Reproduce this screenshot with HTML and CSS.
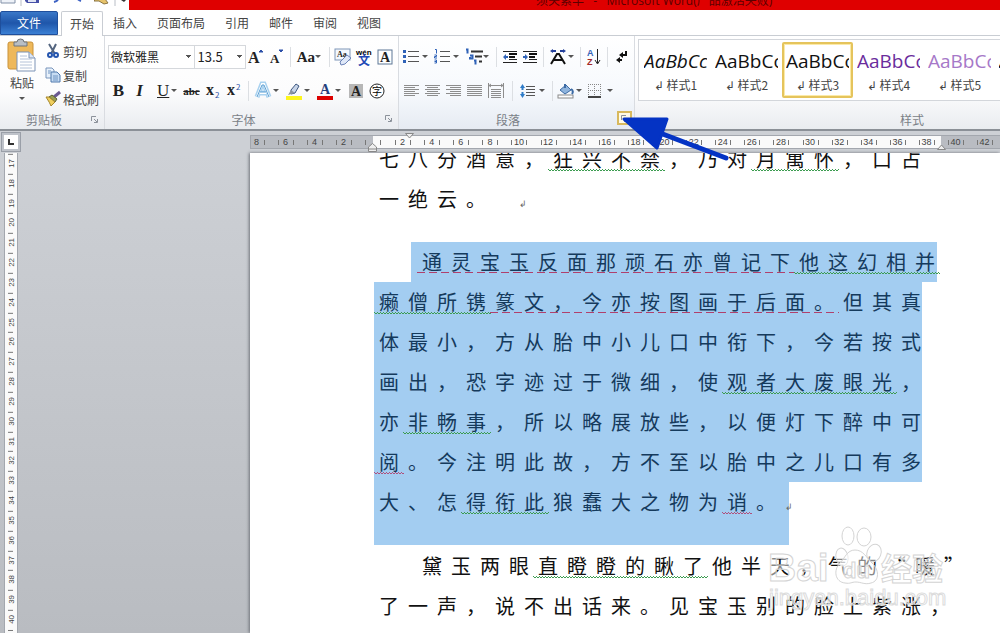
FILE: index.html
```
<!DOCTYPE html>
<html lang="zh-CN">
<head>
    <meta charset="UTF-8">
    <meta name="viewport" content="width=device-width, initial-scale=1.0">
    <title>Microsoft Word</title>
    <link rel="stylesheet" href="styles.css">
</head>
<body>
    <header class="titlebar">
        <div class="quick-access">
            <svg width="129" height="10" viewBox="0 0 129 10">
                <path d="M1 0v3h14V0" fill="#eef2f8" stroke="#8291a8"/>
                <path d="M21 0v6M115 0v6" stroke="#b9bec6"/>
                <path d="M25 0h14v3H27l-2-2z" fill="#4650a8"/>
                <path d="M28 0h8v2h-8z" fill="#dfe4f4"/>
                <path d="M54 2q4-1 4-3M81 1q-3-1-4-3" fill="none" stroke="#3d62c4" stroke-width="2"/>
                <path d="M94 1l5 0 5 3 4-1-3-4h-9z" fill="#e7c36a" stroke="#8a7443"/>
                <path d="M121 0h5l-2 2z" fill="#333"/>
            </svg>
        </div>
        <div class="title">须关索羊&nbsp;&nbsp; -&nbsp;&nbsp; Microsoft Word(产品激活失败)</div>
    </header>

    <nav class="tabs">
        <button class="tab file">文件</button>
        <button class="tab active">开始</button>
        <button class="tab">插入</button>
        <button class="tab">页面布局</button>
        <button class="tab">引用</button>
        <button class="tab">邮件</button>
        <button class="tab">审阅</button>
        <button class="tab">视图</button>
    </nav>

    <div class="ribbon">
        <section class="group clipboard">
            <div class="clip-tools">
                <button class="paste">
                    <svg width="30" height="34" viewBox="0 0 30 34">
                        <rect x="1" y="3" width="25" height="27" rx="2" fill="#eeb85a" stroke="#c9923a"/>
                        <path d="M7 3h3q0-3 3.500-3T17 3h3v4H7z" fill="#b9bec4" stroke="#6e747c"/>
                        <path d="M10 13h12l6 6v13H10z" fill="#fff" stroke="#7d93b5"/>
                        <path d="M22 13v6h6" fill="#dce6f4" stroke="#7d93b5"/>
                        <path d="M13 17h7M13 20h12M13 23h12M13 26h12M13 29h12" stroke="#b4c2d8"/>
                    </svg>
                    <span>粘贴</span>
                    <i class="caret"></i>
                </button>
                <div class="clip-list">
                    <button class="small">
                        <svg width="16" height="16" viewBox="0 0 16 16"><path d="M4 1l6 10M11 1L6 11" stroke="#54657f" stroke-width="2" fill="none"/><circle cx="5" cy="12" r="2" fill="none" stroke="#2555ae" stroke-width="2"/><circle cx="11" cy="12" r="2" fill="none" stroke="#2555ae" stroke-width="2"/></svg>
                        剪切
                    </button>
                    <button class="small">
                        <svg width="16" height="16" viewBox="0 0 16 16"><path d="M1 1h6l2 2v8H1z" fill="#e8f1fb" stroke="#7895bc"/><path d="M6 5h6l3 3v7H6z" fill="#c7dcf3" stroke="#4f78ac"/><path d="M3 4h3M3 6h2M8 9h5M8 11h5M8 13h5" stroke="#6f94c2"/></svg>
                        复制
                    </button>
                    <button class="small">
                        <svg width="16" height="16" viewBox="0 0 16 16"><path d="M15 1l-6 5" stroke="#6b5a92" stroke-width="3"/><path d="M7 4l5 4-2 3-6-5z" fill="#9a9f52" stroke="#5d6136"/><path d="M1 6l3 0 6 5-4 4q-1-3-5-9z" fill="#efcf5e" stroke="#a4852c"/></svg>
                        格式刷
                    </button>
                </div>
            </div>
            <footer class="group-label">剪贴板
                <button class="launcher" aria-label="剪贴板"><svg width="7" height="7" viewBox="0 0 7 7"><path d="M.5 5V.5H5M3 3l3 3M6.500 3v3.500H3" fill="none" stroke="#8c929b"/></svg></button>
            </footer>
        </section>

        <section class="group font">
            <div class="row">
                <select class="font-name" aria-label="字体"><option>微软雅黑</option></select>
                <select class="font-size" aria-label="字号"><option>13.5</option></select>
                <button class="btn"><svg width="16" height="18" viewBox="0 0 16 18"><text x="0" y="15" class="serif" font-size="16">A</text><path d="M11 4l2-2 2 2z" fill="#2d50a8" stroke="#2d50a8"/></svg></button>
                <button class="btn"><svg width="16" height="18" viewBox="0 0 16 18"><text x="1" y="15" class="serif" font-size="13">A</text><path d="M10 2h4l-2 2z" fill="#2d50a8" stroke="#2d50a8"/></svg></button>
                <i class="sep"></i>
                <button class="drop"><b class="serif-text">Aa</b><i class="caret"></i></button>
                <i class="sep"></i>
                <button class="btn"><svg width="18" height="18" viewBox="0 0 18 18"><rect x="1" y="1" width="15" height="11" fill="#f4f8fd" stroke="#7e96b8"/><text x="3" y="9" class="serif" font-size="8">Aa</text><path d="M6 14l7-7 4 3-6 6-4 1z" fill="#dfe8f8" stroke="#6c83b8"/></svg></button>
                <button class="btn"><svg width="18" height="18" viewBox="0 0 18 18"><text x="1" y="7" font-size="8" font-weight="bold" font-family="Liberation Sans">wén</text><text x="3" y="17" font-size="12" font-weight="bold" fill="#2349b5">文</text></svg></button>
                <button class="btn"><svg width="16" height="16" viewBox="0 0 16 16"><rect x="1" y="1" width="14" height="14" fill="#fff" stroke="#5c7796"/><text x="3" y="13" class="serif" font-size="14">A</text></svg></button>
            </div>
            <div class="row">
                <button class="btn"><b class="serif-text big">B</b></button>
                <button class="btn"><em class="serif-text big">I</em></button>
                <button class="drop"><u class="serif-text">U</u><i class="caret"></i></button>
                <button class="btn"><s class="serif-text tiny">abc</s></button>
                <button class="btn"><svg width="16" height="16" viewBox="0 0 16 16"><text x="1" y="12" class="serif" font-size="16">x</text><text x="10" y="15" font-size="8" fill="#2d50a8">2</text></svg></button>
                <button class="btn"><svg width="16" height="16" viewBox="0 0 16 16"><text x="1" y="12" class="serif" font-size="16">x</text><text x="10" y="7" font-size="8" fill="#2d50a8">2</text></svg></button>
                <i class="sep"></i>
                <button class="drop"><svg width="18" height="18" viewBox="0 0 18 18"><path d="M3 15L8 2h2l5 13M6 11h6" fill="none" stroke="#a9d2f0" stroke-width="5"/><path d="M3 15L8 2h2l5 13M6 11h6" fill="none" stroke="#fff" stroke-width="2"/><path d="M3 15L8 3h2l5 12M6 10h6" fill="none" stroke="#5b9ed2"/></svg><i class="caret"></i></button>
                <button class="drop"><svg width="18" height="18" viewBox="0 0 18 18"><path d="M1 14h16v4H1z" fill="#fdf51e"/><path d="M6 8l5-6 3 2-4 7-4 1z" fill="#c7d4e8" stroke="#3f5880"/><path d="M6 8l-3 5 7-2z" fill="#8b93a0"/></svg><i class="caret"></i></button>
                <button class="drop"><svg width="18" height="18" viewBox="0 0 18 18"><path d="M1 14h16v4H1z" fill="#dc0000"/><text x="4" y="12" font-size="14" font-family="Liberation Serif" font-weight="bold" fill="#26407c">A</text></svg><i class="caret"></i></button>
                <button class="btn"><svg width="16" height="16" viewBox="0 0 16 16"><path d="M1 1h14v14H1z" fill="#b7b7b7"/><text x="3" y="13" class="serif" font-size="14">A</text></svg></button>
                <button class="btn"><svg width="16" height="16" viewBox="0 0 16 16"><circle cx="8" cy="8" r="7" fill="#fff" stroke="#222"/><text x="3" y="12" font-size="10">字</text></svg></button>
            </div>
            <footer class="group-label">字体
                <button class="launcher" aria-label="字体"><svg width="7" height="7" viewBox="0 0 7 7"><path d="M.5 5V.5H5M3 3l3 3M6.500 3v3.500H3" fill="none" stroke="#8c929b"/></svg></button>
            </footer>
        </section>

        <section class="group paragraph">
            <div class="row">
                <button class="drop"><svg width="16" height="16" viewBox="0 0 16 16"><path d="M5 2.500h11M5 7.500h11M5 12.500h11" stroke="#555"/><path d="M0 1h3v3H0zM0 6h3v3H0zM0 11h3v3H0z" fill="#2f62b8"/></svg><i class="caret"></i></button>
                <button class="drop"><svg width="16" height="16" viewBox="0 0 16 16"><path d="M6 2.500h10M6 7.500h10M6 12.500h10" stroke="#555"/><path d="M1 .5h1.500v4M.5 6h2v1.500h-2V9H3M.5 11h2v3h-2M.5 12.500h2" fill="none" stroke="#2f62b8"/></svg><i class="caret"></i></button>
                <button class="drop"><svg width="18" height="16" viewBox="0 0 18 16"><path d="M6 2.500h12M10 7.500h7M14 12.500h3" stroke="#333" stroke-width="2"/><path d="M1 .5h1.500v4M5 6.500h2.500v3H5V8M9 11.500h1.500v4" fill="none" stroke="#2f62b8" stroke-width="2"/></svg><i class="caret"></i></button>
                <i class="sep"></i>
                <button class="btn"><svg width="16" height="16" viewBox="0 0 16 16"><path d="M1 2.500h14M7 10.500h8M1 13.500h14" stroke="#222"/><path d="M7 4h8v2H7zM7 7h6v2H7z" fill="#111"/><path d="M1 8l3-3v2h2v2H4v2z" fill="#2f62b8"/></svg></button>
                <button class="btn"><svg width="16" height="16" viewBox="0 0 16 16"><path d="M1 2.500h14M7 10.500h8M1 13.500h14" stroke="#222"/><path d="M7 4h8v2H7zM7 7h6v2H7z" fill="#111"/><path d="M6 8L3 5v2H1v2h2v2z" fill="#2f62b8"/></svg></button>
                <i class="sep"></i>
                <button class="drop"><svg width="18" height="16" viewBox="0 0 18 16"><path d="M2 15L8 5h2l6 10M5 11h8" fill="none" stroke="#111" stroke-width="2"/><path d="M1 2l3-2v1h3v2H4v1zM17 2l-3-2v1h-3v2h3v1z" fill="#24409c"/></svg><i class="caret"></i></button>
                <i class="sep"></i>
                <button class="btn"><svg width="16" height="18" viewBox="0 0 16 18"><text x="1" y="8" font-size="9" font-family="Liberation Sans" font-weight="bold" fill="#3563b8">A</text><text x="1" y="17" font-size="9" font-family="Liberation Sans" font-weight="bold" fill="#a02828">Z</text><path d="M11.500 1v14M9 12l2.500 4 2.500-4" fill="none" stroke="#222"/></svg></button>
                <i class="sep"></i>
                <button class="btn"><svg width="14" height="16" viewBox="0 0 14 16"><path d="M12 2v4H8M8 11H4" fill="none" stroke="#111" stroke-width="2"/><path d="M5 6l4-3v6zM2 11l4-3v6z" fill="#111"/></svg></button>
            </div>
            <div class="row">
                <button class="btn"><svg width="16" height="14" viewBox="0 0 16 14"><path d="M0 1.500h15M0 3.500h11M0 5.500h15M0 7.500h11M0 9.500h15M0 11.500h11" stroke="#8d8d8d"/></svg></button>
                <button class="btn"><svg width="16" height="14" viewBox="0 0 16 14"><path d="M0 1.500h15M2 3.500h11M0 5.500h15M2 7.500h11M0 9.500h15M2 11.500h11" stroke="#8d8d8d"/></svg></button>
                <button class="btn"><svg width="16" height="14" viewBox="0 0 16 14"><path d="M0 1.500h15M4 3.500h11M0 5.500h15M4 7.500h11M0 9.500h15M4 11.500h11" stroke="#8d8d8d"/></svg></button>
                <button class="btn"><svg width="16" height="14" viewBox="0 0 16 14"><path d="M0 1.500h15M0 3.500h15M0 5.500h15M0 7.500h15M0 9.500h15M0 11.500h15" stroke="#8d8d8d"/></svg></button>
                <button class="btn"><svg width="16" height="16" viewBox="0 0 16 16"><path d="M.5 0v15M15.500 0v15M1 2.500h14M3 1L1 2.500 3 4M13 1l2 1.500L13 4M3 6.500h10M3 8.500h10M3 10.500h10M3 12.500h10M3 14.500h10" fill="none" stroke="#8d8d8d"/></svg></button>
                <i class="sep wide"></i>
                <button class="drop"><svg width="16" height="14" viewBox="0 0 16 14"><path d="M6 2.500h9M6 5.500h9M6 8.500h9M6 11.500h9" stroke="#555"/><path d="M0 4l2.500-4L5 4H3.500v2h-2V4zM0 10l2.500 4L5 10H3.500V8h-2v2z" fill="#2f7cc8"/></svg><i class="caret"></i></button>
                <i class="sep"></i>
                <button class="drop"><svg width="18" height="16" viewBox="0 0 18 16"><rect x="1" y="12" width="15" height="3" fill="#fff" stroke="#8a8a8a"/><path d="M3 7l6-5 5 5-6 4z" fill="#8fb4dd" stroke="#3c6ba5"/><path d="M8 5V1M14 6q3 2 1 5" fill="none" stroke="#3c6ba5" stroke-width="2"/></svg><i class="caret"></i></button>
                <button class="drop"><svg width="14" height="14" viewBox="0 0 14 14"><path d="M.5 0v13M6.500 0v13M12.500 0v13M0 .5h13M0 6.500h13" stroke="#888" stroke-dasharray="1 1"/><path d="M0 13h13" stroke="#444" stroke-width="2"/></svg><i class="caret"></i></button>
            </div>
            <footer class="group-label">段落
                <button class="launcher hot" aria-label="段落"><svg width="7" height="7" viewBox="0 0 7 7"><path d="M.5 5V.5H5M3 3l3 3M6.500 3v3.500H3" fill="none" stroke="#8c929b"/></svg></button>
            </footer>
        </section>

        <section class="group styles">
            <div class="gallery">
                <button class="style-item"><span class="sample slanted">AaBbCc</span><span class="style-name">↲ 样式1</span></button>
                <button class="style-item"><span class="sample">AaBbCc</span><span class="style-name">↲ 样式2</span></button>
                <button class="style-item selected"><span class="sample">AaBbCc</span><span class="style-name">↲ 样式3</span></button>
                <button class="style-item"><span class="sample purple">AaBbCc</span><span class="style-name">↲ 样式4</span></button>
                <button class="style-item"><span class="sample lilac">AaBbCc</span><span class="style-name">↲ 样式5</span></button>
                <button class="style-item"><span class="sample slanted">AaBbCc</span><span class="style-name">↲ 样式6</span></button>
            </div>
            <footer class="group-label">样式</footer>
        </section>
    </div>

    <div class="ruler-bar">
        <button class="tab-stop" aria-label="制表符"><svg width="6" height="6" viewBox="0 0 6 6"><path d="M1 0v5h5" fill="none" stroke="#333" stroke-width="2"/></svg></button>
        <div class="ruler">
            <div class="margin-left">
                <span class="cell">8</span><span class="cell">6</span><span class="cell">4</span><span class="cell">2</span><span class="cell half"></span>
            </div>
            <div class="text-area">
                <svg class="marker left" width="9" height="9" viewBox="0 0 9 9"><path d="M.5 8.500V4l4-3.500 4 3.500v4.500zM1 6h7" fill="#eee" stroke="#888"/></svg>
                <svg class="marker first" width="9" height="6" viewBox="0 0 9 6"><path d="M.5.5h8L4.500 5z" fill="#eee" stroke="#888"/></svg>
                <svg class="marker right" width="9" height="6" viewBox="0 0 9 6"><path d="M.5 5.500h8L4.500 1z" fill="#eee" stroke="#888"/></svg>
                <span class="cell">2</span><span class="cell">4</span><span class="cell">6</span><span class="cell">8</span><span class="cell">10</span><span class="cell">12</span><span class="cell">14</span><span class="cell">16</span><span class="cell">18</span><span class="cell">20</span><span class="cell">22</span><span class="cell">24</span><span class="cell">26</span><span class="cell">28</span><span class="cell">30</span><span class="cell">32</span><span class="cell">34</span><span class="cell">36</span><span class="cell">38</span>
            </div>
            <div class="margin-right">
                <span class="cell">40</span><span class="cell">42</span>
            </div>
        </div>
    </div>

    <div class="workspace">
        <div class="side-ruler">
            <span>17</span><span>18</span><span>19</span><span>20</span><span>21</span><span>22</span><span>23</span><span>24</span><span>25</span><span>26</span><span>27</span><span>28</span><span>29</span><span>30</span><span>31</span><span>32</span><span>33</span><span>34</span><span>35</span><span>36</span><span>37</span><span>38</span><span>39</span><span>40</span><span class="rest"></span>
        </div>
        <main class="page">
            <p class="above">
                <span class="line">七八分酒意，<span class="grammar">狂兴不禁</span>，乃对<span class="grammar">月寓怀</span>，口占</span>
                <span class="line">一绝云。<span class="mark far">↲</span></span>
            </p>
            <p class="selection">
                <span class="line first"><span class="dashed">通灵宝玉反面那顽石亦曾记下</span><span class="grammar">他这幻相并</span></span>
                <span class="line"><span class="grammar">癞僧所镌</span><span class="dashed">篆文，今亦按图画于后面。</span>但其真</span>
                <span class="line">体最小，方从胎中小儿口中衔下，今若按式</span>
                <span class="line">画出，恐字迹过于微细，使<span class="grammar">观者大废眼光</span>，</span>
                <span class="line">亦<span class="grammar">非畅事</span>，所以略展放些，以便灯下醉中可</span>
                <span class="line"><span class="spelling">阅</span>。今注明此故，方不至以胎中之儿口有多</span>
                <span class="line last">大、怎<span class="grammar">得衔此</span>狼蠢大之物为<span class="spelling">诮</span>。<span class="mark">↲</span></span>
            </p>
            <p class="below">
                <span class="line first">黛玉两眼<span class="grammar">直瞪瞪的瞅了</span>他半天，气的“暖”</span>
                <span class="line">了一声，说不出话来。见宝玉别的脸上紫涨，</span>
            </p>
        </main>
    </div>

    <svg class="pointer" width="112" height="46" viewBox="0 0 112 46">
        <path d="M40 17L106 42" stroke="#0433c4" stroke-width="5" stroke-linecap="round"/>
        <path d="M4 3L47 3L37 32z" fill="#0433c4" stroke="#0433c4" stroke-width="3" stroke-linejoin="round"/>
    </svg>

    <svg class="watermark" width="190" height="90" viewBox="0 0 190 90">
        <g fill="#fff" fill-opacity=".5" stroke="#d4d4d4" stroke-width="1">
            <text x="1" y="57" font-family="Liberation Sans" font-weight="bold" font-size="39">Bai</text>
            <text x="114" y="56" font-family="Noto Sans CJK SC" font-weight="bold" font-size="31">经验</text>
            <ellipse cx="75" cy="33" rx="6" ry="9" transform="rotate(-12 75 33)"/>
            <ellipse cx="81" cy="12" rx="6" ry="9"/>
            <ellipse cx="97" cy="13" rx="7" ry="9"/>
            <ellipse cx="107" cy="29" rx="7" ry="9" transform="rotate(20 107 29)"/>
            <path d="M88 26c-8 0-10 8-15 13-7 7-5 19 5 20 6 1 6-1 11-1s9 3 15 1c9-2 8-14 1-20-6-6-9-13-17-13z"/>
            <text x="76" y="54" font-family="Liberation Sans" font-weight="bold" font-size="22">du</text>
        </g>
        <text x="2" y="81" font-family="Liberation Sans" font-size="22" fill="#fff" fill-opacity=".5" stroke="#dcdcdc">jingyan.baidu.com</text>
    </svg>
</body>
</html>
```
FILE: styles.css
```
:root {
    --red: #df0000;
    --line: #8b9097;
    --selection: #a3cdf1;
    --ui-text: #444;
}

* {
    box-sizing: border-box;
}

body {
    margin: 0;
    height: 100vh;
    display: flex;
    flex-direction: column;
    overflow: hidden;
    position: relative;
    font-family: "Noto Sans CJK SC", sans-serif;
    font-size: 12px;
    color: var(--ui-text);
    background: #c9ccd1;
}

button {
    font: inherit;
    color: inherit;
    background: none;
    border: 0;
    padding: 0;
    margin: 0;
}

svg {
    display: block;
    flex: none;
    overflow: visible;
}

/* Title bar */
.titlebar {
    display: flex;
    flex: none;
    height: 10px;
    overflow: hidden;
    background: var(--red);
}

.quick-access {
    width: 129px;
    background: #fff;
}

.title {
    flex: 1;
    padding-left: 407px;
    line-height: 16px;
    margin-top: -7px;
    font-family: "Open Sans", "Noto Sans CJK SC", sans-serif;
    color: #5c0000;
    white-space: pre;
}

/* Tabs */
.tabs {
    display: flex;
    flex: none;
    height: 26px;
    padding-top: 1px;
    background: #fff;
    border-bottom: 1px solid #c9cdd3;
}

.tab {
    padding: 0 10px;
    line-height: 24px;
}

.tab.file {
    width: 58px;
    margin-right: 3px;
    color: #fff;
    background: linear-gradient(#3a78c8, #1f56aa 50%, #3b80d4);
    border: 1px solid #1f4f9c;
    border-radius: 2px 2px 0 0;
    line-height: 22px;
}

.tab.active {
    height: 25px;
    padding: 0 8px;
    line-height: 22px;
    background: #fff;
    border: 1px solid #c9cdd3;
    border-bottom: 0;
    border-radius: 2px 2px 0 0;
}

/* Ribbon */
.ribbon {
    display: flex;
    flex: none;
    height: 95px;
    overflow: hidden;
    background: linear-gradient(#fff, #fcfcfd 60%, #e9ecf0);
    border-bottom: 2px solid var(--line);
}

.group {
    display: flex;
    flex-direction: column;
    flex: none;
    padding: 3px 3px 0;
    border-right: 1px solid #d9dce1;
}

.clipboard {
    width: 105px;
}

.font {
    width: 294px;
}

.paragraph {
    width: 236px;
    padding-left: 2px;
    background: linear-gradient(#fff, #f6f9fd 60%, #e6ebf2);
}

.styles {
    min-width: 555px;
    flex: 1 0 auto;
}

.group-label {
    display: flex;
    justify-content: center;
    align-items: center;
    position: relative;
    height: 18px;
    margin-top: auto;
    margin-bottom: 1px;
    padding-right: 16px;
    color: #7a7f87;
}

.styles .group-label {
    padding-right: 0;
}

.launcher {
    display: grid;
    place-items: center;
    position: absolute;
    right: -1px;
    top: 1px;
    width: 15px;
    height: 14px;
}

.launcher.hot {
    border: 2px solid #d8b95e;
    background: #fffbe8;
}

.row {
    display: flex;
    flex: none;
    align-items: center;
    height: 33px;
}

.font .row:first-child,
.paragraph .row:first-child {
    height: 35px;
}

.btn,
.drop {
    display: flex;
    align-items: center;
    justify-content: center;
    width: 21px;
    height: 22px;
    color: #222;
}

.drop {
    width: 31px;
    justify-content: space-between;
    padding: 0 4px 0 2px;
}

.caret {
    flex: none;
    border: 3px solid transparent;
    border-top-color: #555;
    border-bottom: 0;
}

.sep {
    width: 8px;
    height: 20px;
    background: linear-gradient(#dcdfe3, #dcdfe3) center / 1px 100% no-repeat;
}

.paragraph .sep {
    width: 6px;
}

.paragraph .sep.wide {
    width: 12px;
}

.serif {
    font-family: "Liberation Serif", serif;
    font-weight: bold;
    fill: #222;
}

.serif-text {
    font-family: "Liberation Serif", serif;
    font-size: 15px;
    line-height: 20px;
}

.drop u.serif-text {
    margin-left: 5px;
    font-size: 17px;
}

.serif-text.big {
    font-size: 17px;
    font-weight: bold;
}

.serif-text.tiny {
    font-size: 11px;
    font-weight: bold;
}

select {
    appearance: none;
    height: 24px;
    padding: 0 2px;
    border: 1px solid #d5d8dc;
    border-radius: 0;
    font: inherit;
    color: #222;
    background:
        conic-gradient(from -45deg at 50% 100%, #555 90deg, transparent 0) right 3px center / 5px 3px no-repeat,
        #fff;
}

.font-name {
    width: 88px;
}

.font-size {
    width: 52px;
    padding-left: 3px;
    border-left: 0;
    font-size: 13px;
}

/* Clipboard */
.clip-tools {
    display: flex;
    gap: 4px;
}

.paste {
    display: flex;
    flex-direction: column;
    align-items: center;
    width: 38px;
}

.paste span {
    line-height: 20px;
}

.paste .caret {
    margin-top: 4px;
}

.clip-list {
    display: flex;
    flex-direction: column;
}

.small {
    display: flex;
    align-items: center;
    gap: 2px;
    height: 24px;
    white-space: nowrap;
}

/* Styles gallery */
.gallery {
    display: flex;
    height: 62px;
    padding: 2px 1px;
    background: #fff;
    border: 1px solid #d3d6db;
    overflow: hidden;
}

.style-item {
    display: flex;
    flex-direction: column;
    align-items: center;
    flex: none;
    width: 71px;
    padding: 4px 2px 0;
    border: 2px solid transparent;
    border-radius: 2px;
}

.style-item.selected {
    border-color: #e5c45c;
    box-shadow: inset 0 0 0 1px #fbeaa8;
}

.sample {
    width: 63px;
    overflow: hidden;
    text-align: left;
    font-family: "Open Sans", sans-serif;
    font-size: 19px;
    line-height: 26px;
    color: #111;
}

.sample.slanted {
    font-style: italic;
}

.sample.purple {
    color: #6a2c9c;
}

.sample.lilac {
    color: #a678c8;
}

.style-name {
    line-height: 22px;
}

/* Rulers */
.ruler-bar {
    display: flex;
    flex: none;
    align-items: center;
    height: 22px;
    background: #cdd0d5;
}

.tab-stop {
    display: grid;
    place-items: center;
    width: 20px;
    height: 20px;
    margin: 0 229px 0 1px;
    background: #fff;
    border: 3px solid #bfc3ca;
    outline: 1px solid #9a9fa8;
    outline-offset: -1px;
}

.ruler {
    display: flex;
    flex: 1;
    height: 14px;
    font-family: "Liberation Sans", sans-serif;
    font-size: 9px;
    line-height: 12px;
    border: 1px solid #a3a7ae;
    border-right: 0;
    background: #b9bcc2;
}

.margin-left {
    display: flex;
    justify-content: flex-end;
    width: 122px;
    overflow: hidden;
}

.text-area {
    display: flex;
    position: relative;
    width: 568px;
    padding-left: 15px;
    background:
        linear-gradient(#777, #777) 7px center / 1px 5px no-repeat,
        #fafafa;
}

.margin-right {
    display: flex;
    flex: 1;
    overflow: hidden;
}

.cell {
    flex: none;
    width: 29px;
    text-align: center;
    background:
        linear-gradient(#777, #777) 7px center / 1px 5px no-repeat,
        linear-gradient(#777, #777) 22px center / 1px 5px no-repeat;
}

.text-area .cell {
    flex: 1;
}

.cell.half {
    width: 15px;
}

.marker {
    position: absolute;
}

.marker.left {
    left: -5px;
    bottom: -4px;
}

.marker.first {
    left: 32px;
    top: -3px;
}

.marker.right {
    right: -5px;
    bottom: -2px;
}

/* Document */
.workspace {
    display: flex;
    flex: 1;
    min-height: 0;
    background: linear-gradient(#cdd0d5, #b9bcc1);
}

.side-ruler {
    display: flex;
    flex-direction: column;
    width: 14px;
    margin: 0 232px 0 4px;
    background: #fafafa;
    border: 1px solid #a3a7ae;
    border-width: 0 1px;
    font-family: "Liberation Sans", sans-serif;
    font-size: 8px;
}

.side-ruler span {
    display: flex;
    align-items: center;
    justify-content: center;
    flex: 1;
    min-height: 0;
    writing-mode: vertical-rl;
    transform: rotate(180deg);
    background: linear-gradient(#777, #777) center bottom 1px / 5px 1px no-repeat;
}

.side-ruler .rest {
    flex: .2;
}

.page {
    flex: 1;
    min-width: 0;
    overflow: hidden;
    padding-left: 124px;
    background: #fff;
    box-shadow: -1px 0 3px #6c7077;
    font-size: 20px;
    line-height: 40px;
    color: #111;
}

.page p {
    margin: 0;
}

.page .above {
    margin-top: -14px;
    margin-bottom: 23px;
}

.page .below {
    margin-top: 1px;
}

.line {
    display: block;
    width: 548px;
    height: 40px;
    padding-left: 5px;
    letter-spacing: 9px;
    white-space: nowrap;
}

.line.first {
    width: 526px;
    margin-left: 37px;
    padding-left: 11px;
}

.selection {
    color: #153a5c;
}

.selection .line {
    background: var(--selection);
}

.selection .last {
    width: 415px;
    height: 63px;
}

/* Proofing underlines */
.grammar,
.spelling,
.dashed {
    margin-left: -5px;
    padding-left: 5px;
    background:
        repeating-linear-gradient(90deg, var(--wave) 0 1px, transparent 1px 3px) 0 25px / calc(100% - 4px) 1px no-repeat,
        repeating-linear-gradient(90deg, transparent 0 1px, var(--wave) 1px 3px) 0 26px / calc(100% - 4px) 1px no-repeat;
}

.grammar {
    --wave: #3c9c50;
}

.spelling {
    --wave: #b0507c;
}

.dashed {
    background: repeating-linear-gradient(90deg, #b0406c 0 8px, transparent 8px 12px) 0 25px / calc(100% - 4px) 1px no-repeat;
}

.mark {
    font-size: 9px;
    color: #666;
}

.mark.far {
    margin-left: 24px;
}

/* Overlays */
.pointer {
    position: absolute;
    left: 620px;
    top: 116px;
}

.watermark {
    position: absolute;
    left: 767px;
    top: 524px;
}
```
